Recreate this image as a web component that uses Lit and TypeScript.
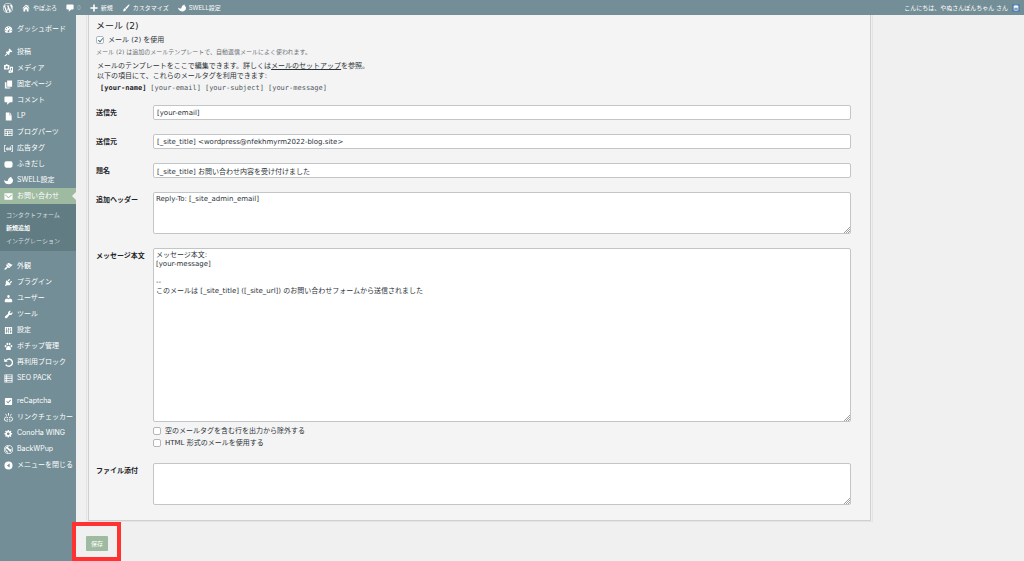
import { LitElement, html, css, svg, nothing, TemplateResult } from "lit";
import { customElement } from "lit/decorators.js";
import { classMap } from "lit/directives/class-map.js";

const icons: Record<string, TemplateResult> = {
  wordpress: svg`<path d="M20 10c0-5.51-4.49-10-10-10C4.48 0 0 4.49 0 10c0 5.52 4.48 10 10 10 5.51 0 10-4.48 10-10zM7.78 15.37L4.37 6.22c.55-.02 1.17-.08 1.17-.08.5-.06.44-1.13-.06-1.11 0 0-1.45.11-2.37.11-.18 0-.37 0-.58-.01C4.12 2.69 6.87 1.11 10 1.11c2.33 0 4.45.87 6.05 2.34-.68-.11-1.65.39-1.65 1.58 0 .74.45 1.36.9 2.1.35.61.55 1.36.55 2.46 0 1.49-1.4 5-1.4 5l-3.03-8.37c.54-.02.82-.17.82-.17.5-.05.44-1.25-.06-1.22 0 0-1.44.12-2.38.12-.87 0-2.33-.12-2.33-.12-.5-.03-.56 1.2-.06 1.22l.92.08 1.26 3.41zM17.41 10c.24-.64.74-1.87.43-4.25.7 1.29 1.05 2.71 1.05 4.25 0 3.29-1.73 6.24-4.4 7.78.97-2.59 1.94-5.2 2.92-7.78zM6.1 18.09C3.12 16.65 1.11 13.53 1.11 10c0-1.3.23-2.48.72-3.59C3.25 10.3 4.67 14.2 6.1 18.09zm4.03-6.63l2.58 6.98c-.86.29-1.76.45-2.71.45-.79 0-1.57-.11-2.29-.33.81-2.38 1.62-4.74 2.42-7.1z"/>`,
  home: svg`<path d="M16 7.500l3 3-1.500 1.500L10 4.600 2.500 12 1 10.500 10 1.500l3.500 3.500V3H16zM10 6.500l6.500 6.200V19h-4.500v-5.500H8V19H3.500v-6.300z"/>`,
  comment: svg`<path d="M3 1h14c1.100 0 2 .9 2 2v9c0 1.100-.9 2-2 2h-4l-6 5.500V14H3c-1.100 0-2-.9-2-2V3c0-1.100.9-2 2-2z"/>`,
  plus: svg`<path d="M8 1h4v7h7v4h-7v7H8v-7H1V8h7z"/>`,
  brush: svg`<path d="M18.3 1.5c1 .9.5 2-.3 3l-7 8.5-3.300-3 7.600-7.700c.9-.9 2.100-1.600 3-.8zM6.800 10.900l3.300 3c-.2 3.100-3.800 5.100-8.600 4.300 2.700-1.300 1.600-3.800 2.900-5.900.6-1 1.500-1.400 2.400-1.400z"/>`,
  swell: svg`<path d="M0 9c2.500 2.500 5 3 8.500 1.500C8.500 6.500 12 2.500 17 1.500c-1 2-.5 3 1 4 1.500 1 2 2.500 2 4.500C20 15.500 15.500 18.500 10.500 18.500 5 18.500 0 15 0 9z"/>`,
  dashboard: svg`<path fill-rule="evenodd" d="M3.760 17h12.480A8.200 8.200 0 0 0 18.500 11.500C18.500 6.800 14.700 3 10 3S1.500 6.800 1.500 11.500c0 2 .8 4 2.260 5.500zM10 4.500a1.200 1.200 0 1 1 0 2.400 1.200 1.200 0 0 1 0-2.400zM5.700 6.500a1.200 1.200 0 1 1 0 2.400 1.200 1.200 0 0 1 0-2.400zM4 10.700a1.200 1.200 0 1 1 0 2.400 1.200 1.200 0 0 1 0-2.400zM16 10.700a1.200 1.200 0 1 1 0 2.400 1.200 1.200 0 0 1 0-2.400zM14.800 6.400l-3.200 6.500a2 2 0 1 1-2-.9z"/>`,
  pin: svg`<path d="M10.440 3.020l1.820-1.820 6.360 6.350-1.830 1.820c-1.050-.68-2.480-.57-3.410.36l-.75.75c-.92.93-1.040 2.350-.35 3.410l-1.830 1.820-2.410-2.410-2.800 2.790c-.42.42-3.380 2.710-3.800 2.290s1.860-3.390 2.280-3.810l2.790-2.790L4.100 9.360l1.830-1.820c1.050.69 2.480.57 3.400-.36l.75-.75c.93-.92 1.050-2.350.36-3.410z"/>`,
  media: svg`<path fill-rule="evenodd" d="M1 2h2.500l1-1.500h3L8.500 2H12v10H0V2zM6 4.500a2.700 2.700 0 1 0 0 5.400 2.700 2.700 0 0 0 0-5.400zM13.500 6H20v10.500a2.800 2.800 0 1 1-2.500-2.800V9h-2v8a2.800 2.800 0 1 1-5.500 0c0-2 1.500-3 3.500-3z"/>`,
  pages: svg`<path d="M7 1h11v14H7zM2 5h3.500v11.500H14V19H2z"/>`,
  page: svg`<path d="M4 1h8v6h5v12H4zM13 1l4 5h-4z"/>`,
  blocks: svg`<path fill-rule="evenodd" d="M1 2h18v16H1zM3 4v2h14V4zM3 8v3h4V8zm6 0v3h3V8zm5 0v3h3V8zM3 13v3h4v-3zm6 0v3h8v-3z"/>`,
  ad: svg`<path d="M0 3h4v1.500H1.700v11H4V17H0zM16 3h4v14h-4v-1.500h2.300v-11H16z"/><path fill="none" stroke="currentColor" stroke-width="1.800" d="M9 8v6M9 11a2 2.200 0 1 0-4 0 2 2.200 0 0 0 4 0M15 5v9M15 11a2 2.200 0 1 0-4 0 2 2.200 0 0 0 4 0"/>`,
  balloon: svg`<rect x="1" y="3" width="18" height="14" rx="4"/>`,
  mail: svg`<path fill-rule="evenodd" d="M1 3h18v14H1zM3 5l7 6.500L17 5v2.500l-7 6.300-7-6.300z"/>`,
  appearance: svg`<path d="M14.480 11.060L7.410 3.990l1.500-1.500c.5-.56 2.300-.47 3.510.32 1.210.8 1.430 1.280 2.910 2.100 1.180.64 2.450 1.260 4.450.85zm-.71.71L6.700 4.700 4.930 6.470c-.39.39-.39 1.020 0 1.410l1.060 1.060c.39.39.39 1.030 0 1.420-.6.6-1.430 1.110-2.210 1.690-.35.26-.7.53-1.010.84C1.430 14.230.4 16.080 1.400 17.070c.99 1 2.840-.03 4.180-1.360.31-.31.58-.66.85-1.020.57-.78 1.080-1.610 1.690-2.210.39-.39 1.020-.39 1.410 0l1.060 1.060c.39.39 1.020.39 1.410 0z"/>`,
  plugin: svg`<path d="M13.110 4.360L9.870 7.600 8 5.730l3.240-3.240c.35-.34 1.050-.2 1.560.32.52.51.66 1.210.31 1.550zm-8 1.770l.91-1.120 9.010 9.010-1.190.84c-.71.71-2.630 1.160-3.820 1.160H6.140L4.900 17.260c-.59.59-1.540.59-2.120 0-.59-.58-.59-1.530 0-2.120l1.240-1.240v-3.880c0-1.130.4-3.190 1.090-3.890zm7.260 3.970l3.240-3.240c.34-.35 1.040-.21 1.550.31.52.51.66 1.210.31 1.550l-3.240 3.250z"/>`,
  user: svg`<path d="M10 9.250c-2.270 0-2.730-3.440-2.730-3.440C7 4.020 7.820 2 9.970 2c2.160 0 2.980 2.020 2.710 3.810 0 0-.41 3.440-2.680 3.440zM10 11.500L12.720 10c3 0 5.500 2 5.500 4.530v3s-3.650 1-8.240 1c-4.600 0-8.240-1-8.240-1v-3c0-2.500 2.500-4.480 5.500-4.480z"/>`,
  wrench: svg`<path d="M17.500 9.770c-1.340 1.340-3.800 2-5.500 1.300l-5.200 6.700c-1.100 1.100-3 1.100-4.100 0s-1.100-3 0-4.100l6.500-5.200c-.7-1.700-.2-4 1.200-5.400 1.300-1.300 3.200-1.700 4.900-1.100l-2.900 2.900 2.820 2.820 3.300-3.200c.6 1.700.3 3.900-1.020 5.280z"/>`,
  sliders: svg`<path fill-rule="evenodd" d="M2 2h16v16H2zM5 4v6H4v2h1v4h1.500v-4h1.500v-2H6.500V4zM9.300 4v2H8.500v2h.8v8h1.500V8h1.700V6h-1.700V4zM14 4v7h-1v2h1v3h1.500v-3h1v-2h-1V4z"/>`,
  paw: svg`<ellipse cx="3.500" cy="9" rx="2" ry="2.600"/><ellipse cx="7.500" cy="4.500" rx="2" ry="2.700"/><ellipse cx="12.500" cy="4.500" rx="2" ry="2.700"/><ellipse cx="16.500" cy="9" rx="2" ry="2.600"/><path d="M10 9c3 0 5.500 4 5.500 6.500 0 3-3 2-5.500 2s-5.500 1-5.500-2C4.500 13 7 9 10 9z"/>`,
  reuse: svg`<path fill="none" stroke="currentColor" stroke-width="3" d="M4 6A8 8 0 1 1 4 14.500"/><path d="M0 1l1 8 7.500-1z"/>`,
  list: svg`<path fill-rule="evenodd" d="M1 1h18v18H1zM3 3v2.500h2V3zm4 0v2.500h10V3zM3 7v2.500h2V7zm4 0v2.500h10V7zM3 11v2.500h2V11zm4 0v2.500h10V11zM3 15v2h2v-2zm4 0v2h10v-2z"/>`,
  check: svg`<path fill-rule="evenodd" d="M4 2h12a2 2 0 0 1 2 2v12a2 2 0 0 1-2 2H4a2 2 0 0 1-2-2V4a2 2 0 0 1 2-2zM5 9.500l4 5L15.500 7 14 5.500l-5 6-2.500-3z"/>`,
  link: svg`<path fill="none" stroke="currentColor" stroke-width="2" d="M9 10.500L6 9a4.500 4.500 0 1 0-1 9h4M11 10.500L14 9a4.500 4.500 0 1 1 1 9h-4M6 14h3M11 14h3M10 6V0M6 6L3.500 2M14 6l2.500-4"/>`,
  gear: svg`<path fill-rule="evenodd" d="M18 12h-2.180c-.17.7-.44 1.350-.81 1.930l1.540 1.540-2.100 2.100-1.540-1.540c-.58.36-1.230.63-1.910.79V19H8v-2.180c-.68-.16-1.330-.43-1.910-.79l-1.540 1.540-2.120-2.120 1.540-1.540c-.36-.58-.63-1.230-.79-1.910H1V9.030h2.170c.16-.7.44-1.350.8-1.940L2.430 5.550l2.100-2.100 1.540 1.540c.58-.37 1.240-.64 1.930-.81V2h3v2.180c.68.16 1.330.43 1.910.79l1.540-1.540 2.120 2.120-1.540 1.540c.36.59.64 1.240.8 1.940H18V12zm-8.500 1.500c1.660 0 3-1.340 3-3s-1.340-3-3-3-3 1.340-3 3 1.340 3 3 3z"/>`,
  backup: svg`<circle cx="10" cy="10" r="9" fill="none" stroke="currentColor" stroke-width="1.800"/><path d="M4 5c2-2 5-2.500 7-1.500L9 6l6 4 1-3c1.500 3 .5 7-2 8.500L5.500 7 4.500 9.500C5 12 6 14 9 15v2C3.500 16.500 1.500 9 4 5z"/>`,
  collapse: svg`<path fill-rule="evenodd" d="M10 1a9 9 0 1 1 0 18 9 9 0 0 1 0-18zM12.500 5.500L6.500 10l6 4.500z"/>`,
};

const icon = (name: string) =>
  html`<svg class="icon" viewBox="0 0 20 20" fill="currentColor" aria-hidden="true">${icons[name]}</svg>`;

type Item = [icon: string, label: string];

const menu: Item[][] = [
  [["dashboard", "ダッシュボード"]],
  [
    ["pin", "投稿"],
    ["media", "メディア"],
    ["pages", "固定ページ"],
    ["comment", "コメント"],
    ["page", "LP"],
    ["blocks", "ブログパーツ"],
    ["ad", "広告タグ"],
    ["balloon", "ふきだし"],
    ["swell", "SWELL設定"],
    ["mail", "お問い合わせ"],
  ],
  [
    ["appearance", "外観"],
    ["plugin", "プラグイン"],
    ["user", "ユーザー"],
    ["wrench", "ツール"],
    ["sliders", "設定"],
    ["paw", "ポチップ管理"],
    ["reuse", "再利用ブロック"],
    ["list", "SEO PACK"],
  ],
  [
    ["check", "reCaptcha"],
    ["link", "リンクチェッカー"],
    ["gear", "ConoHa WING"],
    ["backup", "BackWPup"],
    ["collapse", "メニューを閉じる"],
  ],
];

const submenu = ["コンタクトフォーム", "新規追加", "インテグレーション"];
const activeItem = "お問い合わせ";
const activeSub = "新規追加";

@customElement("admin-bar")
export class AdminBar extends LitElement {
  static styles = css`
    :host {
      display: flex;
      justify-content: space-between;
      align-items: center;
      height: 15px;
      padding: 0 4px 0 3px;
      background: #738e96;
      color: #fff;
      font: 6px/15px Inter, "Noto Sans CJK JP", sans-serif;
    }
    nav {
      display: flex;
      gap: 9px;
    }
    a {
      display: flex;
      align-items: center;
      gap: 3px;
      color: inherit;
      text-decoration: none;
      white-space: nowrap;
    }
    .icon {
      width: 8px;
      height: 8px;
      flex: none;
    }
    .logo .icon {
      width: 10px;
      height: 10px;
    }
    .count {
      color: #adc0c5;
    }
    .account {
      gap: 4px;
    }
    .avatar {
      width: 8px;
      height: 8px;
    }
  `;

  render() {
    return html`
      <nav>
        <a href="#" class="logo" aria-label="WordPress">${icon("wordpress")}</a>
        <a href="#">${icon("home")}やぽぶろ</a>
        <a href="#">${icon("comment")}<span class="count">0</span></a>
        <a href="#">${icon("plus")}新規</a>
        <a href="#">${icon("brush")}カスタマイズ</a>
        <a href="#">${icon("swell")}SWELL設定</a>
      </nav>
      <a href="#" class="account">
        こんにちは、やぬさんぽんちゃん さん
        <svg class="avatar" viewBox="0 0 16 16" aria-hidden="true">
          <rect width="16" height="16" rx="2" fill="#5680ab" />
          <path d="M3 5c0-5 10-5 10 0v6c0 4-10 4-10 0z" fill="#a9c6df" />
          <path d="M4 4h8v3H4z" fill="#fff" />
          <path d="M5 9h6v2H5z" fill="#5c7f9c" />
        </svg>
      </a>
    `;
  }
}

@customElement("admin-menu")
export class AdminMenu extends LitElement {
  static styles = css`
    :host {
      display: block;
      background: #738e96;
      color: #fff;
      font: 7px/16px Inter, "Noto Sans CJK JP", sans-serif;
    }
    nav {
      display: flex;
      flex-direction: column;
      gap: 7px;
      padding-top: 6px;
    }
    ul {
      list-style: none;
      margin: 0;
      padding: 0;
    }
    a {
      color: inherit;
      text-decoration: none;
      white-space: nowrap;
    }
    .item {
      position: relative;
      display: flex;
      align-items: center;
      gap: 4px;
      height: 16px;
      padding-left: 4px;
    }
    .item.active {
      background: #9ebaa0;
    }
    .item.active::after {
      content: "";
      position: absolute;
      right: 0;
      top: 4px;
      border: 4px solid transparent;
      border-left-width: 0;
      border-right-color: #f0f0f0;
    }
    .icon {
      width: 9px;
      height: 9px;
      flex: none;
    }
    .submenu {
      padding: 4px 0 4px 6px;
      background: #627c83;
      color: #d5dee0;
      font-size: 6px;
      line-height: 13px;
    }
    .submenu .current {
      color: #fff;
      font-weight: 700;
    }
  `;

  render() {
    return html`<nav>
      ${menu.map(
        (group) => html`<ul>
          ${group.map(
            ([name, label]) => html`<li>
              <a href="#" class=${classMap({ item: true, active: label === activeItem })}>${icon(name)}<span>${label}</span></a>
              ${label === activeItem
                ? html`<ul class="submenu">
                    ${submenu.map((s) => html`<li><a href="#" class=${classMap({ current: s === activeSub })}>${s}</a></li>`)}
                  </ul>`
                : nothing}
            </li>`
          )}
        </ul>`
      )}
    </nav>`;
  }
}

@customElement("mail-form")
export class MailForm extends LitElement {
  static styles = css`
    :host {
      display: block;
      color: #2c3338;
      font: 7px/10px "DejaVu Sans", "Noto Sans CJK JP", sans-serif;
    }
    * {
      box-sizing: border-box;
    }
    .frame {
      border: solid #e4e4e4;
      border-width: 0 1px 1px;
      padding: 0 1px 0;
    }
    .panel {
      padding: 5px 19px 15px 7px;
      border: solid #cfd0d1;
      border-width: 0 1px 1px;
      background: #f4f4f4;
    }
    h2 {
      margin: 0 0 2px;
      color: #1d2327;
      font-size: 9px;
      line-height: 12px;
      font-weight: 400;
    }
    p {
      margin: 0;
    }
    .check {
      display: flex;
      align-items: center;
      gap: 4px;
      line-height: 12px;
      width: fit-content;
    }
    .check input {
      position: relative;
      appearance: none;
      width: 8px;
      height: 8px;
      margin: 0;
      border: 1px solid #b4b7ba;
      border-radius: 2px;
      background: #fff;
    }
    .check input:checked::before {
      content: "";
      position: absolute;
      left: 2px;
      top: 0;
      width: 2px;
      height: 4px;
      border: solid #4a7f9c;
      border-width: 0 1px 1px 0;
      transform: rotate(40deg);
    }
    .note {
      margin: 1px 0 4px;
      color: #6b7075;
      font-size: 6px;
    }
    .legend {
      padding-left: 1px;
    }
    .legend a {
      color: inherit;
    }
    .tags {
      display: flex;
      gap: 4px;
      margin: 2px 0 11px;
      padding-left: 4px;
      font: 7px/11px "DejaVu Sans Mono", monospace;
      color: #50575e;
    }
    .tags strong {
      color: #1d2327;
    }
    .fields {
      display: grid;
      grid-template-columns: 57px 1fr;
      row-gap: 14px;
    }
    .name {
      padding-top: 3px;
      color: #1d2327;
      font-weight: 700;
      white-space: nowrap;
    }
    .text,
    textarea {
      display: block;
      width: 100%;
      margin: 0;
      border: 1px solid #c3c6c8;
      border-radius: 2px;
      background: #fff;
      color: #2c3338;
      font: inherit;
    }
    .text {
      height: 15px;
      padding: 1px 3px 0;
    }
    textarea {
      height: 42px;
      padding: 2px;
      line-height: 9px;
      resize: none;
      overflow: hidden;
    }
    textarea.tall {
      height: 174px;
    }
    .area {
      position: relative;
    }
    .grip {
      position: absolute;
      right: 1px;
      bottom: 1px;
      width: 6px;
      height: 6px;
    }
    .options {
      margin-top: 3px;
    }
    .submit {
      position: relative;
      width: fit-content;
      margin-top: 14px;
    }
    .submit button {
      display: block;
      height: 15px;
      padding: 0 5px;
      border: 0;
      border-radius: 1px;
      background: #9ebaa0;
      color: #fff;
      font: 6px/15px "Noto Sans CJK JP", sans-serif;
    }
    .highlight {
      position: absolute;
      inset: -14px -13px -10px -14px;
      border: 4px solid #ff3131;
      pointer-events: none;
    }
  `;

  private field(id: string, label: string, value: string) {
    return html`<label class="name" for=${id}>${label}</label>
      <input class="text" id=${id} type="text" .value=${value} />`;
  }

  private area(id: string, value: string, tall = false) {
    return html`<div class="area">
      <textarea id=${id} class=${classMap({ tall })} .value=${value}></textarea>
      <svg class="grip" viewBox="0 0 6 6" stroke="#777" stroke-width="0.700" aria-hidden="true">
        <path d="M0 6L6 0M2 6L6 2M4 6L6 4" />
      </svg>
    </div>`;
  }

  render() {
    return html`<form @submit=${(e: Event) => e.preventDefault()}>
      <div class="frame">
        <div class="panel">
          <h2>メール (2)</h2>
          <label class="check"><input type="checkbox" checked />メール (2) を使用</label>
          <p class="note">メール (2) は追加のメールテンプレートで、自動返信メールによく使われます。</p>
          <p class="legend">メールのテンプレートをここで編集できます。詳しくは<a href="#">メールのセットアップ</a>を参照。</p>
          <p class="legend">以下の項目にて、これらのメールタグを利用できます:</p>
          <p class="tags">
            <strong>[your-name]</strong><span>[your-email]</span><span>[your-subject]</span><span>[your-message]</span>
          </p>
          <div class="fields">
            ${this.field("to", "送信先", "[your-email]")}
            ${this.field("from", "送信元", "[_site_title] <wordpress@nfekhmyrm2022-blog.site>")}
            ${this.field("subject", "題名", "[_site_title] お問い合わせ内容を受け付けました")}
            <label class="name" for="headers">追加ヘッダー</label>
            ${this.area("headers", "Reply-To: [_site_admin_email]")}
            <label class="name" for="body">メッセージ本文</label>
            <div>
              ${this.area(
                "body",
                "メッセージ本文:\n[your-message]\n\n--\nこのメールは [_site_title] ([_site_url]) のお問い合わせフォームから送信されました",
                true
              )}
              <div class="options">
                <label class="check"><input type="checkbox" />空のメールタグを含む行を出力から除外する</label>
                <label class="check"><input type="checkbox" />HTML 形式のメールを使用する</label>
              </div>
            </div>
            <label class="name" for="files">ファイル添付</label>
            ${this.area("files", "")}
          </div>
        </div>
      </div>
      <div class="submit">
        <button type="submit">保存</button>
        <span class="highlight"></span>
      </div>
    </form>`;
  }
}

@customElement("app-root")
export class AppRoot extends LitElement {
  static styles = css`
    :host {
      display: flex;
      flex-direction: column;
      min-height: 100vh;
      background: #f0f0f0;
    }
    .body {
      flex: 1;
      display: grid;
      grid-template-columns: 76px 1fr;
    }
    main {
      min-width: 0;
      padding: 0 151px 10px 10px;
    }
  `;

  render() {
    return html`
      <admin-bar></admin-bar>
      <div class="body">
        <admin-menu></admin-menu>
        <main><mail-form></mail-form></main>
      </div>
    `;
  }
}
